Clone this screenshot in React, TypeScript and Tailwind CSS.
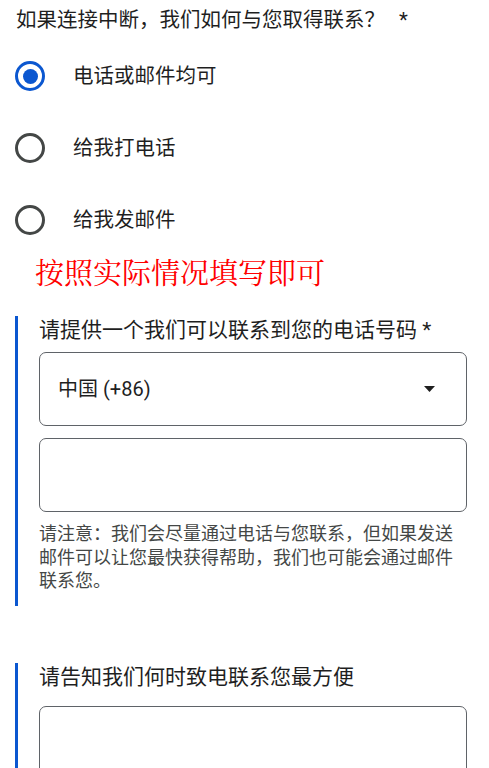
import React from "react";

const font = { fontFamily: "Roboto, 'Noto Sans CJK SC', sans-serif" };

function Radio({ checked, label }: { checked?: boolean; label: string }) {
  return (
    <div className="flex h-[72px] items-center">
      <div
        className={
          checked
            ? "-ml-px flex h-[30px] w-[30px] items-center justify-center rounded-full border-[3px] border-[#0b57d0]"
            : "-ml-px flex h-[30px] w-[30px] items-center justify-center rounded-full border-[3px] border-[#444746]"
        }
      >
        {checked && <div className="h-[15px] w-[15px] rounded-full bg-[#0b57d0]" />}
      </div>
      <span className="ml-[28px] text-[20.5px] leading-[28px] text-[#1f1f1f]">{label}</span>
    </div>
  );
}

export default function App() {
  return (
    <div className="min-h-[768px] w-[489px] bg-white pl-4 pr-[22px] pt-1" style={font}>
      <div className="text-[20.5px] leading-[32px] text-[#1f1f1f]">
        如果连接中断，我们如何与您取得联系？<span className="ml-[14px]">*</span>
      </div>
      <div className="pt-[4px]">
        <Radio checked label="电话或邮件均可" />
        <Radio label="给我打电话" />
        <Radio label="给我发邮件" />
      </div>
      <div
        className="pl-[19px] text-[29px] leading-[32px] text-[#ff0000]"
        style={{ fontFamily: "'Noto Serif CJK SC', 'Liberation Serif', serif" }}
      >
        按照实际情况填写即可
      </div>
      <div className="-ml-px mt-[28px] flex">
        <div className="w-[3px] shrink-0 bg-[#0b57d0]" />
        <div className="flex-1 pb-[13px] pl-[21px]">
          <div className="text-[21px] leading-[28px] text-[#1f1f1f]">
            请提供一个我们可以联系到您的电话号码 *
          </div>
          <div className="mt-2 flex h-[74px] items-center justify-between rounded-[7px] border border-[#5f6368] pl-[18px] pr-[31px]">
            <span className="text-[20px] text-[#1f1f1f]">中国 (+86)</span>
            <svg width="11" height="6" viewBox="0 0 11 6">
              <path d="M0 0 L11 0 L5.5 6 Z" fill="#1f1f1f" />
            </svg>
          </div>
          <div className="mt-3 h-[74px] rounded-[7px] border border-[#5f6368]" />
          <div className="mt-[10px] text-[18px] leading-[23.5px] text-[#444746]">
            请注意：我们会尽量通过电话与您联系，但如果发送邮件可以让您最快获得帮助，我们也可能会通过邮件联系您。
          </div>
        </div>
      </div>
      <div className="-ml-px mt-[57px] flex">
        <div className="w-[3px] shrink-0 bg-[#0b57d0]" />
        <div className="flex-1 pl-[21px]">
          <div className="text-[21px] leading-[28px] text-[#1f1f1f]">请告知我们何时致电联系您最方便</div>
          <div className="mt-[15px] h-[74px] rounded-[7px] border border-[#5f6368]" />
        </div>
      </div>
    </div>
  );
}
